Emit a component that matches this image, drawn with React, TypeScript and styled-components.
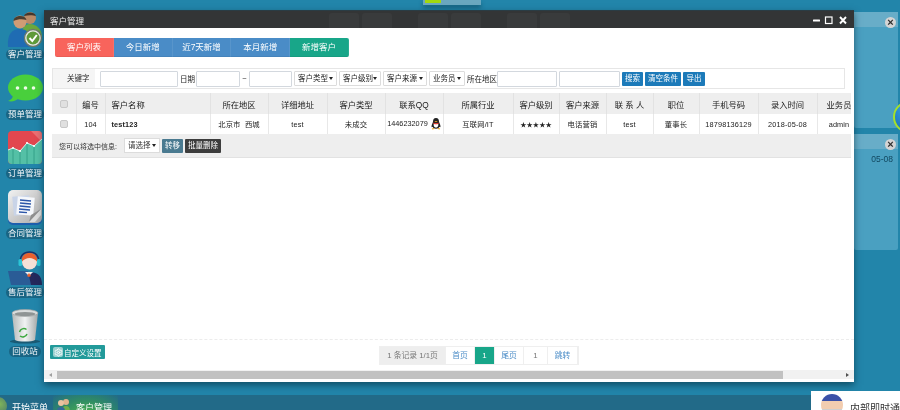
import styled, { createGlobalStyle } from 'styled-components';
import { Settings } from 'lucide-react';

const GlobalStyle = createGlobalStyle`
  html, body { margin: 0; padding: 0; background: #2285aa; }
  body { font-family: "Liberation Sans", "Noto Sans CJK SC", sans-serif; overflow: hidden; }
  #root { filter: blur(0.35px); }
  * { box-sizing: border-box; }
`;

const columns = [24, 29, 105, 58, 59, 58, 58, 70, 46, 47, 47, 46, 59, 59, 44];
const heads = ['编号', '客户名称', '所在地区', '详细地址', '客户类型', '联系QQ', '所属行业', '客户级别', '客户来源', '联 系 人', '职位', '手机号码', '录入时间', '业务员'];
const tabs = ['今日新增', '近7天新增', '本月新增'];

function App() {
  return (
    <Desktop>
      <GlobalStyle />
      <WorkArea>
        <Shortcuts>
          <Shortcut><PeopleIcon /><Pill>客户管理</Pill></Shortcut>
          <Shortcut><ChatIcon /><Pill>预单管理</Pill></Shortcut>
          <Shortcut><ChartIcon /><Pill>订单管理</Pill></Shortcut>
          <Shortcut><DocIcon /><Pill>合同管理</Pill></Shortcut>
          <Shortcut><AgentIcon /><Pill>售后管理</Pill></Shortcut>
          <Shortcut><TrashIcon /><Pill $narrow>回收站</Pill></Shortcut>
        </Shortcuts>

        <TopDock><DockLight /></TopDock>

        <Widget $top={12}>
          <WidgetHead><CloseDot>×</CloseDot></WidgetHead>
        </Widget>
        <Orb />
        <Widget $top={134}>
          <WidgetHead><CloseDot>×</CloseDot></WidgetHead>
          <WidgetDate>05-08</WidgetDate>
        </Widget>

        <Window>
          <TitleBar>
            <span>客户管理</span>
            <GhostTiles>
              <GhostTile /><GhostTile /><GhostGap /><GhostTile /><GhostTile /><GhostGap /><GhostTile /><GhostTile />
            </GhostTiles>
            <Controls>
              <svg width="34" height="9" viewBox="0 0 34 9">
                <rect x="0" y="3.5" width="7" height="2" rx="0.5" fill="#fff" />
                <rect x="12.5" y="1" width="6.5" height="6.5" fill="none" stroke="#fff" strokeWidth="1.2" />
                <path d="M27 1l6 6.5M33 1l-6 6.5" stroke="#fff" strokeWidth="1.9" />
              </svg>
            </Controls>
          </TitleBar>

          <Body>
            <Tabs>
              <Tab $color="#f8645c">客户列表</Tab>
              {tabs.map((t) => (
                <Tab key={t} $color="#4a8cc7">{t}</Tab>
              ))}
              <Tab $color="#18a689">新增客户</Tab>
            </Tabs>

            <Filters>
              <KeyLabel>关键字</KeyLabel>
              <Field $w={78} />
              <FilterText $w={14}>日期</FilterText>
              <Field $w={44} />
              <FilterText $w={5}>~</FilterText>
              <Field $w={43} />
              <FakeSelect $w={43}>客户类型</FakeSelect>
              <FakeSelect $w={42}>客户级别</FakeSelect>
              <FakeSelect $w={44}>客户来源</FakeSelect>
              <FakeSelect $w={36}>业务员</FakeSelect>
              <FilterText $w={28}>所在地区</FilterText>
              <Field $w={60} />
              <Field $w={61} />
              <BlueButton $w={21}>搜索</BlueButton>
              <BlueButton $w={36}>清空条件</BlueButton>
              <BlueButton $w={22}>导出</BlueButton>
            </Filters>

            <TableClip>
              <Grid>
                <colgroup>
                  {columns.map((w, i) => (
                    <Col key={i} $w={w} />
                  ))}
                </colgroup>
                <thead>
                  <tr>
                    <HeadCell><Check /></HeadCell>
                    {heads.map((h, i) => (
                      <HeadCell key={h} $left={i === 1}>{h}</HeadCell>
                    ))}
                  </tr>
                </thead>
                <tbody>
                  <tr>
                    <Cell><Check /></Cell>
                    <Cell>104</Cell>
                    <Cell $left $bold>test123</Cell>
                    <Cell>北京市&nbsp;&nbsp;西城</Cell>
                    <Cell>test</Cell>
                    <Cell>未成交</Cell>
                    <Cell $tight>1446232079 <QQIcon /></Cell>
                    <Cell>互联网/IT</Cell>
                    <Cell><Stars>★★★★★</Stars></Cell>
                    <Cell>电话营销</Cell>
                    <Cell>test</Cell>
                    <Cell>董事长</Cell>
                    <Cell>18798136129</Cell>
                    <Cell>2018-05-08</Cell>
                    <Cell>admin</Cell>
                  </tr>
                </tbody>
              </Grid>
              <BatchBar>
                <BatchHint>您可以将选中信息:</BatchHint>
                <BatchSelect>请选择</BatchSelect>
                <BatchButton $color="#4a7a90">转移</BatchButton>
                <BatchButton $color="#3d3d3d">批量删除</BatchButton>
              </BatchBar>
            </TableClip>
          </Body>

          <PagerRow>
            <CustomButton>
              <GearBox><Settings size={9} strokeWidth={2.4} color="#fff" /></GearBox>
              自定义设置
            </CustomButton>
            <Pager>
              <PageCell $w={66} $info>1 条记录 1/1页</PageCell>
              <PageCell $w={29} $link>首页</PageCell>
              <PageCell $w={20} $active>1</PageCell>
              <PageCell $w={29} $link>尾页</PageCell>
              <PageCell $w={24}>1</PageCell>
              <PageCell $w={30} $link>跳转</PageCell>
            </Pager>
          </PagerRow>

          <ScrollBar>
            <Arrow $dir="left" />
            <Thumb />
            <Arrow $dir="right" />
          </ScrollBar>
        </Window>
      </WorkArea>

      <TaskBar>
        <StartOrb />
        <StartLabel>开始菜单</StartLabel>
        <TaskItem>
          <svg width="13" height="14" viewBox="0 0 13 14">
            <circle cx="9" cy="4" r="3" fill="#e3b48e" />
            <path d="M5 14c0-4 1-6 4-6s4 2 4 6z" fill="#6fae4a" />
            <circle cx="4" cy="5" r="3" fill="#eac3a0" />
            <path d="M0 14c0-4 1-5 4-5s4 1 4 5z" fill="#35689a" />
          </svg>
          <span>客户管理</span>
        </TaskItem>
        <ChatDock>
          <Avatar />
          <span>内部即时通讯</span>
        </ChatDock>
      </TaskBar>
    </Desktop>
  );
}

export default App;

/* icons */
function PeopleIcon() {
  return (
    <svg width="36" height="36" viewBox="0 0 36 36">
      <circle cx="23" cy="7" r="6" fill="#b98a66" />
      <path d="M17 5c1-4 10-5 12 0-3-1-8-1-12 0z" fill="#44362c" />
      <path d="M14 28c0-10 3-15 9-15s12 5 12 13z" fill="#6ca83c" />
      <circle cx="13" cy="11" r="6.5" fill="#d09c75" />
      <path d="M6.500 10c0-6 12-7 13-1-4-1-9-1-13 1z" fill="#4a3d30" />
      <path d="M1 36c-1-13 4-18 12-18s11 5 11 18z" fill="#1f6cb3" />
      <circle cx="26" cy="27" r="8.5" fill="#e9e9e9" stroke="#6d7a68" strokeWidth="1.3" />
      <circle cx="26" cy="27" r="6.500" fill="#5f9a3a" />
      <path d="M22.500 27l2.800 3 4.500-6" fill="none" stroke="#fff" strokeWidth="2" />
    </svg>
  );
}

function ChatIcon() {
  return (
    <svg width="36" height="36" viewBox="0 0 36 36">
      <ellipse cx="18.500" cy="16.500" rx="17.500" ry="13" fill="#49cf3c" />
      <path d="M6 24c0 3-2 5-5 6 4 1 8 0 11-3z" fill="#49cf3c" />
      <circle cx="10.500" cy="17" r="1.800" fill="#eefbe9" />
      <circle cx="18.500" cy="17" r="1.800" fill="#eefbe9" />
      <circle cx="26.500" cy="17" r="1.800" fill="#eefbe9" />
    </svg>
  );
}

function ChartIcon() {
  return (
    <svg width="36" height="36" viewBox="0 0 36 36">
      <rect x="1" y="1" width="34" height="33" rx="4" fill="#e2474f" />
      <path d="M24 1h7a4 4 0 0 1 4 4v7z" fill="#ea6f72" />
      <path d="M1 20l5-2 7 3 7-8 7 3 8-7v21a4 4 0 0 1-4 4H5a4 4 0 0 1-4-4z" fill="#54c0a6" />
      <path d="M1 20l5-2 7 3 7-8 7 3 8-7" fill="none" stroke="#d9f2ec" strokeWidth="1" />
      <path d="M6 18v16M13 21v13M20 13v21M27 16v18" stroke="#2d9a84" strokeWidth="0.8" />
      <circle cx="6" cy="18" r="1.100" fill="#fff" />
      <circle cx="13" cy="21" r="1.100" fill="#fff" />
      <circle cx="20" cy="13" r="1.100" fill="#fff" />
      <circle cx="27" cy="16" r="1.100" fill="#fff" />
    </svg>
  );
}

function DocIcon() {
  return (
    <svg width="36" height="36" viewBox="0 0 36 36">
      <defs>
        <linearGradient id="docBg" x1="0" y1="0" x2="1" y2="1">
          <stop offset="0" stopColor="#f2f2f2" />
          <stop offset="1" stopColor="#a9a9a9" />
        </linearGradient>
      </defs>
      <rect x="1" y="2" width="34" height="33" rx="5" fill="#1f5fae" />
      <rect x="1" y="0" width="34" height="33" rx="5" fill="url(#docBg)" />
      <rect x="6" y="6" width="17" height="19" fill="#c9d4e8" transform="rotate(-5 14 15)" />
      <rect x="10" y="7" width="17" height="18" fill="#f5f7fb" transform="rotate(5 19 16)" />
      <path d="M13 10l11 1M13 13l11 1M12.500 16l11 1M12 19l11 1M12 22l8 .7" stroke="#2c56a8" strokeWidth="1.300" />
      <path d="M22 32l12-13v6l-6 7z" fill="#ddd" />
      <path d="M22 32l2-7 10-6z" fill="#8f8f8f" />
    </svg>
  );
}

function AgentIcon() {
  return (
    <svg width="36" height="36" viewBox="0 0 36 36">
      <path d="M9 36c0-10 5-13 13-13s13 3 13 13z" fill="#24285c" />
      <path d="M1 22h20l3 14H4z" fill="#2a5c96" />
      <path d="M18 23h8l-4 4z" fill="#eee" />
      <circle cx="22.500" cy="13" r="7.500" fill="#f5e1d7" />
      <path d="M14.500 13c0-7 4-9 8-9s8 2 8 9c-3-3-5-4-8-4s-5 1-8 4z" fill="#e8602f" />
      <path d="M13 14c0-8 4-11 9.500-11S32 6 32 14" fill="none" stroke="#1d2f66" strokeWidth="1.300" />
      <rect x="11.500" y="10" width="3.500" height="7" rx="1.500" fill="#2ac5d6" />
      <rect x="30" y="10" width="3.500" height="7" rx="1.500" fill="#2ac5d6" />
      <path d="M22 24l-2 3 2 1 2-1z" fill="#e8602f" />
    </svg>
  );
}

function TrashIcon() {
  return (
    <svg width="36" height="36" viewBox="0 0 36 36">
      <defs>
        <linearGradient id="binBody" x1="0" y1="0" x2="1" y2="0">
          <stop offset="0" stopColor="#b4b8b8" />
          <stop offset="0.5" stopColor="#f1f3f3" />
          <stop offset="1" stopColor="#a4a8a8" />
        </linearGradient>
      </defs>
      <ellipse cx="18" cy="33.500" rx="15" ry="2" fill="#1a5a74" />
      <path d="M5 5h26l-3 27c-3 2-17 2-20 0z" fill="url(#binBody)" />
      <ellipse cx="18" cy="5" rx="13" ry="3.500" fill="#d9dcdc" stroke="#9ca0a0" strokeWidth="0.700" />
      <ellipse cx="18" cy="6" rx="10.500" ry="2" fill="#8f9494" />
      <path d="M12.500 24a4.500 4.500 0 0 1 7-2.500M20 26a4.500 4.500 0 0 1-7 2" fill="none" stroke="#3da83f" strokeWidth="1.500" />
    </svg>
  );
}

function QQIcon() {
  return (
    <QQWrap width="10" height="12" viewBox="0 0 10 12">
      <path d="M5 0C2.800 0 2 1.800 2 3.500c0 1-1.500 3-1.500 5 0 1 .7 1 1.200.3C2 10 3 10.800 5 10.800s3-.8 3.300-2c.5.700 1.200.7 1.200-.3 0-2-1.500-4-1.500-5C8 1.800 7.200 0 5 0z" fill="#222" />
      <path d="M3 5c1 .6 3 .6 4 0 .6 2 .5 4.500-2 4.500S2.400 7 3 5z" fill="#fff" />
      <path d="M2.500 4.600c1.500.8 3.500.8 5 0l.1 1.200c-1.600.7-3.600.7-5.200 0z" fill="#e0352b" />
      <path d="M3.300 3.400L5 2.900l1.700.5L5 4.300z" fill="#f3a81f" />
      <path d="M.8 11c.5-1.300 2-1.300 3-.4-1 1-2.400 1-3 .4zM9.200 11c-.5-1.300-2-1.300-3-.4 1 1 2.400 1 3 .4z" fill="#f3a81f" />
    </QQWrap>
  );
}

/** style **/
const Desktop = styled.div`
  position: relative;
  width: 900px;
  height: 410px;
  overflow: hidden;
  display: flex;
  flex-direction: column;
  background: #2285aa;
`;

const WorkArea = styled.div`
  position: relative;
  flex: 0 0 395px;
`;

const Shortcuts = styled.div`
  width: 38px;
  margin-left: 6px;
  padding-top: 1px;
  display: flex;
  flex-direction: column;
`;

const Shortcut = styled.div`
  height: 59.4px;
  display: flex;
  flex-direction: column;
  align-items: center;
  justify-content: flex-end;
  svg {
    display: block;
    flex: none;
    margin-bottom: 2px;
  }
`;

const Pill = styled.div<{ $narrow?: boolean }>`
  width: ${(p) => (p.$narrow ? '32px' : '38px')};
  height: 11px;
  line-height: 11px;
  border-radius: 6px;
  background: rgba(22, 84, 112, 0.65);
  color: #f2f7f9;
  font-size: 8.5px;
  text-align: center;
  white-space: nowrap;
  flex: none;
`;

const TopDock = styled.div`
  position: absolute;
  left: 423px;
  top: 0;
  width: 58px;
  height: 5px;
  background: #6aa7bf;
  box-shadow: 0 3px 4px rgba(10, 60, 80, 0.5);
`;

const DockLight = styled.div`
  width: 16px;
  height: 3px;
  margin-left: 2px;
  background: #a2d80e;
`;

const Widget = styled.div<{ $top: number }>`
  position: absolute;
  left: 854px;
  top: ${(p) => p.$top}px;
  width: 44px;
  height: 116px;
  border-radius: 2px;
  background: #4aa0c1;
`;

const WidgetHead = styled.div`
  height: 15px;
  position: relative;
  background: #68adc8;
`;

const CloseDot = styled.div`
  position: absolute;
  right: 2px;
  top: 5px;
  width: 11px;
  height: 11px;
  border-radius: 50%;
  background: #d4d4d4;
  color: #2e2e2e;
  font: bold 11px/10px "Liberation Sans", sans-serif;
  text-align: center;
`;

const WidgetDate = styled.div`
  margin-top: 5px;
  padding-right: 5px;
  text-align: right;
  font-size: 8.500px;
  color: #124860;
`;

const Orb = styled.div`
  position: absolute;
  left: 893px;
  top: 101px;
  width: 32px;
  height: 32px;
  border-radius: 50%;
  border: 2px solid #a5e02a;
  background: radial-gradient(circle at 60% 15%, #d8eef9 0%, #2f95dd 40%, #1769b0 100%);
`;

const Window = styled.div`
  position: absolute;
  left: 44px;
  top: 10px;
  width: 810px;
  height: 372px;
  display: flex;
  flex-direction: column;
  background: #fff;
  box-shadow: 0 3px 7px rgba(5, 40, 55, 0.6);
`;

const TitleBar = styled.div`
  position: relative;
  flex: 0 0 18px;
  display: flex;
  align-items: center;
  padding-left: 6px;
  background: #333536;
  border-top: 1px solid #2a3c44;
  color: #f0f0f0;
  font-size: 8.500px;
`;

const GhostTiles = styled.div`
  position: absolute;
  left: 285px;
  top: 2px;
  display: flex;
  gap: 3px;
`;

const GhostTile = styled.div`
  width: 30px;
  height: 15px;
  border-radius: 3px 3px 0 0;
  background: rgba(255, 255, 255, 0.03);
`;

const GhostGap = styled.div`
  width: 20px;
`;

const Controls = styled.div`
  position: absolute;
  right: 7px;
  top: 5px;
  svg {
    display: block;
  }
`;

const Body = styled.div`
  flex: 1;
  padding: 10px 3px 0 8px;
  min-height: 0;
  border-bottom: 1px dashed #ececec;
`;

const Tabs = styled.div`
  display: flex;
  margin-left: 3px;
`;

const Tab = styled.div<{ $color: string }>`
  width: 58.800px;
  height: 19px;
  line-height: 18px;
  text-align: center;
  font-size: 8.500px;
  color: #fff;
  background: ${(p) => p.$color};
  border-right: 1px solid rgba(255, 255, 255, 0.08);
  border-bottom: 1px solid rgba(0, 0, 0, 0.06);
  &:first-child {
    border-radius: 2px 0 0 2px;
  }
  &:last-child {
    border-radius: 0 2px 2px 0;
  }
`;

const Filters = styled.div`
  width: 793px;
  height: 21px;
  margin-top: 11px;
  display: flex;
  align-items: center;
  gap: 2px;
  border: 1px solid #e6e6e6;
  font-size: 7.500px;
  color: #222;
`;

const KeyLabel = styled.div`
  width: 45px;
  height: 19px;
  padding-left: 14px;
  line-height: 19px;
  background: #f5f5f5;
  border-right: 3px solid #fff;
  white-space: nowrap;
`;

const Field = styled.div<{ $w: number }>`
  width: ${(p) => p.$w}px;
  height: 16px;
  background: #fff;
  border: 1px solid #d3d8de;
  border-radius: 1px;
`;

const FilterText = styled.div<{ $w: number }>`
  width: ${(p) => p.$w}px;
  white-space: nowrap;
  text-align: center;
`;

const FakeSelect = styled.div<{ $w: number }>`
  position: relative;
  width: ${(p) => p.$w}px;
  height: 15px;
  line-height: 13px;
  padding-left: 3px;
  border: 1px solid #dcdcdc;
  border-radius: 1px;
  white-space: nowrap;
  overflow: hidden;
  &::after {
    content: '';
    position: absolute;
    right: 3px;
    top: 5px;
    border: 2.500px solid transparent;
    border-top: 3.500px solid #222;
  }
`;

const BlueButton = styled.div<{ $w: number }>`
  width: ${(p) => p.$w}px;
  height: 14px;
  line-height: 14px;
  text-align: center;
  background: #1c7ab9;
  color: #fff;
  border-radius: 1px;
  white-space: nowrap;
`;

const TableClip = styled.div`
  margin-top: 4px;
  overflow: hidden;
`;

const Grid = styled.table`
  width: 809px;
  table-layout: fixed;
  border-collapse: collapse;
  color: #222;
`;

const Col = styled.col<{ $w: number }>`
  width: ${(p) => p.$w}px;
`;

const HeadCell = styled.th<{ $left?: boolean }>`
  height: 21px;
  padding: 0 ${(p) => (p.$left ? '6px' : '0')};
  background: #eeeeee;
  border-right: 1px solid #e2e2e2;
  font-size: 8.300px;
  font-weight: normal;
  color: #222;
  text-align: ${(p) => (p.$left ? 'left' : 'center')};
  white-space: nowrap;
`;

const Cell = styled.td<{ $left?: boolean; $bold?: boolean; $tight?: boolean }>`
  height: 20px;
  padding: 0 ${(p) => (p.$left ? '6px' : '0')};
  border-right: 1px solid #e8e8e8;
  font-size: 7.300px;
  font-weight: ${(p) => (p.$bold ? 'bold' : 'normal')};
  letter-spacing: ${(p) => (p.$tight ? '0' : '0.15px')};
  text-align: ${(p) => (p.$left ? 'left' : 'center')};
  white-space: nowrap;
`;

const Stars = styled.span`
  font-size: 6.300px;
  letter-spacing: 0;
`;

const Check = styled.div`
  width: 8px;
  height: 8px;
  margin: 0 auto;
  border: 1px solid #c8c8c8;
  border-radius: 2px;
  background: #e0e0e0;
`;

const QQWrap = styled.svg`
  display: inline-block;
  vertical-align: middle;
  margin-left: 1px;
`;

const BatchBar = styled.div`
  height: 24px;
  padding-left: 7px;
  display: flex;
  align-items: center;
  gap: 2px;
  background: #eeeeee;
  border-bottom: 1px solid #e2e2e2;
  font-size: 7.500px;
  color: #333;
`;

const BatchHint = styled.span`
  width: 60px;
  font-size: 7px;
  white-space: nowrap;
`;

const BatchSelect = styled.div`
  position: relative;
  width: 36px;
  height: 15px;
  margin-left: 3px;
  line-height: 13px;
  padding-left: 3px;
  background: #fff;
  border: 1px solid #dcdcdc;
  &::after {
    content: '';
    position: absolute;
    right: 3px;
    top: 5px;
    border: 2.500px solid transparent;
    border-top: 3.500px solid #222;
  }
`;

const BatchButton = styled.div<{ $color: string }>`
  height: 14px;
  padding: 0 3px;
  line-height: 14px;
  background: ${(p) => p.$color};
  color: #fff;
  border-radius: 1px;
`;

const PagerRow = styled.div`
  flex: 0 0 30px;
  display: flex;
  align-items: flex-start;
  padding: 5px 0 0 6px;
`;

const CustomButton = styled.div`
  width: 55px;
  height: 14px;
  display: flex;
  align-items: center;
  gap: 1px;
  padding-left: 3px;
  background: #229a9a;
  border-radius: 1px;
  color: #fff;
  font-size: 7.500px;
  white-space: nowrap;
`;

const GearBox = styled.div`
  width: 10px;
  height: 10px;
  display: flex;
  align-items: center;
  justify-content: center;
  background: #9bd0d0;
  border-radius: 2px;
`;

const Pager = styled.div`
  margin-left: 274px;
  margin-top: 1px;
  height: 19px;
  display: flex;
  border: 1px solid #efefef;
  font-size: 7.800px;
`;

const PageCell = styled.div<{ $w: number; $info?: boolean; $active?: boolean; $link?: boolean }>`
  width: ${(p) => p.$w}px;
  line-height: 17px;
  text-align: center;
  white-space: nowrap;
  border-right: 1px solid #efefef;
  background: ${(p) => (p.$active ? '#18a689' : p.$info ? '#eeeeee' : '#fff')};
  color: ${(p) => (p.$active ? '#fff' : p.$link ? '#4a8cc7' : '#777')};
`;

const ScrollBar = styled.div`
  flex: 0 0 9px;
  margin-bottom: 3px;
  display: flex;
  align-items: center;
  background: #f1f1f1;
`;

const Thumb = styled.div`
  width: 726px;
  height: 8px;
  margin-left: 5px;
  background: #c1c1c1;
`;

const Arrow = styled.div<{ $dir: 'left' | 'right' }>`
  width: 0;
  height: 0;
  margin-left: ${(p) => (p.$dir === 'left' ? '5px' : '63px')};
  border: 2.500px solid transparent;
  ${(p) =>
    p.$dir === 'left'
      ? 'border-right: 3px solid #a0a0a0; border-left-width: 0;'
      : 'border-left: 3px solid #505050; border-right-width: 0;'}
`;

const TaskBar = styled.div`
  position: relative;
  flex: 0 0 30px;
  display: flex;
  background: #226a88;
  color: #fff;
  font-size: 9px;
`;

const StartOrb = styled.div`
  width: 18px;
  height: 18px;
  margin: 2px 0 0 -11px;
  border-radius: 50%;
  background: radial-gradient(circle at 60% 40%, #7fb45a, #3a6a70);
`;

const StartLabel = styled.div`
  margin: 6px 0 0 5px;
  width: 41px;
`;

const TaskItem = styled.div`
  width: 65px;
  height: 30px;
  display: flex;
  gap: 6px;
  padding: 3px 0 0 4px;
  background: radial-gradient(ellipse at 50% 70%, #4fb84a 0%, #2f8a66 55%, #226a88 100%);
  span {
    margin-top: 3px;
  }
`;

const ChatDock = styled.div`
  position: absolute;
  left: 811px;
  top: -4px;
  width: 89px;
  height: 34px;
  display: flex;
  gap: 7px;
  padding-left: 10px;
  background: #fff;
  color: #333;
  font-size: 10px;
  white-space: nowrap;
  overflow: hidden;
  span {
    margin-top: 9px;
  }
`;

const Avatar = styled.div`
  flex: 0 0 22px;
  height: 22px;
  margin-top: 3px;
  border-radius: 50%;
  background: linear-gradient(#3a50a8 0 30%, #f2cdb0 30% 70%, #cfcfcf 70%);
`;
